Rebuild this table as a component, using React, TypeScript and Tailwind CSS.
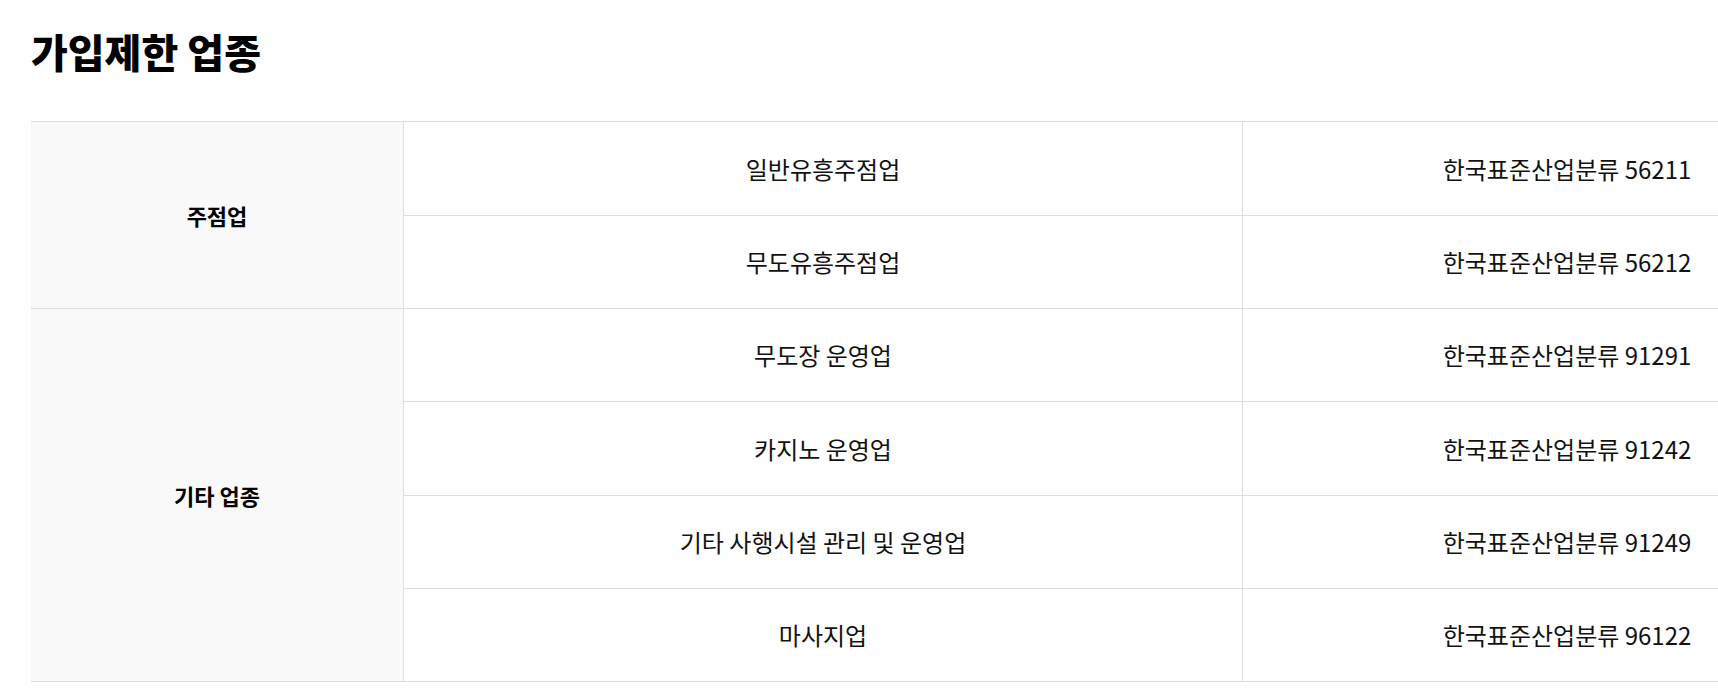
import React from "react";

const rows = [
  { name: "일반유흥주점업", code: "한국표준산업분류 56211" },
  { name: "무도유흥주점업", code: "한국표준산업분류 56212" },
  { name: "무도장 운영업", code: "한국표준산업분류 91291" },
  { name: "카지노 운영업", code: "한국표준산업분류 91242" },
  { name: "기타 사행시설 관리 및 운영업", code: "한국표준산업분류 91249" },
  { name: "마사지업", code: "한국표준산업분류 96122" },
];

const rowClasses = [
  "row-start-1",
  "row-start-2",
  "row-start-3",
  "row-start-4",
  "row-start-5",
  "row-start-6",
];

export default function App() {
  return (
    <div className="w-full h-[692px] overflow-hidden bg-white font-['Noto_Sans_CJK_KR',sans-serif] text-[#111]">
      <div className="pl-[31px]">
        <h2 className="mt-[31px] text-[40px] leading-[40px] font-black text-black">
          가입제한 업종
        </h2>
        <div className="mt-[50px] w-[1860px] border-t border-[#dddddd] grid grid-cols-[372px_839px_649px] grid-rows-[94px_93px_93px_94px_93px_93px]">
          <div className="col-start-1 row-start-1 row-span-2 bg-[#f9f9f9] border-b border-[#dddddd] flex items-center justify-center text-[22px] font-bold text-black">
            주점업
          </div>
          <div className="col-start-1 row-start-3 row-span-4 bg-[#f9f9f9] border-b border-[#dddddd] flex items-center justify-center text-[22px] font-bold text-black">
            기타 업종
          </div>
          {rows.map((r, i) => (
            <React.Fragment key={r.code}>
              <div
                className={`col-start-2 ${rowClasses[i]} border-l border-b border-[#dddddd] flex items-center justify-center text-[24px]`}
              >
                {r.name}
              </div>
              <div
                className={`col-start-3 ${rowClasses[i]} border-l border-b border-[#dddddd] flex items-center justify-center text-[24px]`}
              >
                {r.code}
              </div>
            </React.Fragment>
          ))}
        </div>
      </div>
    </div>
  );
}
